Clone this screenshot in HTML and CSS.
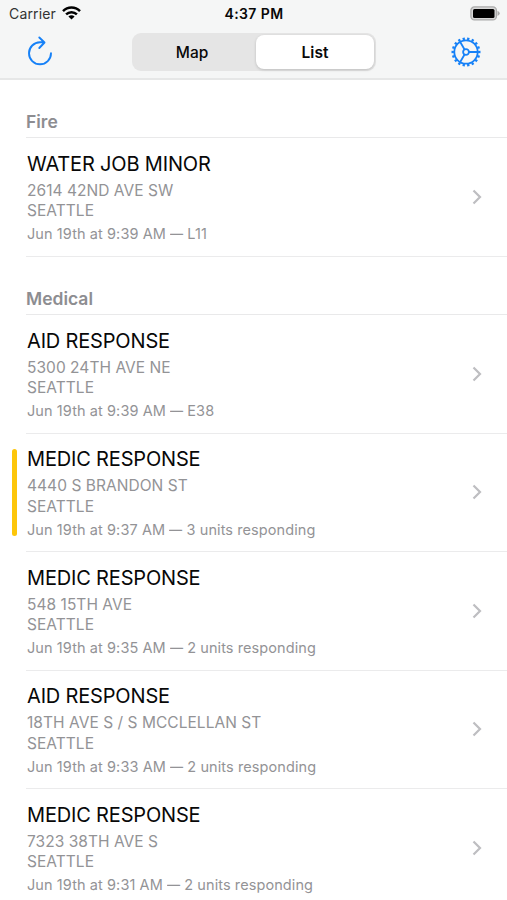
FILE: index.html
```
<!DOCTYPE html>
<html lang="en">
<head>
<meta charset="utf-8">
<title>Incidents</title>
<link rel="stylesheet" href="styles.css">
</head>
<body>
<header class="top">
  <div class="status">
    <div class="carrier"><span>Carrier</span>
      <svg width="19" height="14" viewBox="0 0 19 14" fill="none" stroke="#000" stroke-width="2.5"><path d="M1 5.2C5.8.4 13.2.4 18 5.2M4.1 8.4c3-3 7.8-3 10.800 0"/><path d="M9.500 13.600 6.400 10.500c1.700-1.600 4.500-1.600 6.200 0z" fill="#000" stroke="none"/></svg>
    </div>
    <div class="time">4:37 PM</div>
    <svg class="battery" width="31" height="15" viewBox="0 0 31 15"><rect x=".9" y=".9" width="25.500" height="13" rx="3.500" fill="#d8d8d8" stroke="#aaa" stroke-width="1.300"/><rect x="3" y="2.900" width="21.500" height="9" rx="1.500" fill="#000"/><path d="M27.500 4.700q4.500 2.700 0 5.400z" fill="#aaa"/></svg>
  </div>
  <nav class="toolbar">
    <svg class="refresh" width="26" height="31" viewBox="0 0 26 31" fill="none" stroke="#1681f7" stroke-width="1.900" stroke-linecap="round" stroke-linejoin="round"><path d="M24 17.300A11 11 0 1 1 13 6.300h4.300M12.300 1.500l5.200 5-5.200 5.500"/></svg>
    <div class="segments"><span class="segment">Map</span><span class="segment selected">List</span></div>
    <svg class="gear" width="30" height="30" viewBox="-15 -15 30 30" fill="none" stroke="#1681f7" stroke-width="1.800"><circle r="11.700"/><circle r="13.300" stroke-width="2.400" pathLength="72" stroke-dasharray="2 2" stroke-dashoffset="1"/><circle r="2.900"/><path d="M2.900 0H11.500M-1.450-2.500-5.800-10M-1.450 2.500-5.800 10"/></svg>
  </nav>
</header>
<main>
  <section>
    <h2>Fire</h2>
    <article class="row">
      <div class="info"><h3>WATER JOB MINOR</h3><p class="place">2614 42ND AVE SW<br>SEATTLE</p><p class="when">Jun 19th at 9:39 AM <span class="dash">—</span> L11</p></div>
      <svg class="chevron" viewBox="0 0 10 16"><path d="m1.500 1.500 6.500 6.500-6.500 6.500"/></svg>
    </article>
  </section>
  <section>
    <h2>Medical</h2>
    <article class="row">
      <div class="info"><h3>AID RESPONSE</h3><p class="place">5300 24TH AVE NE<br>SEATTLE</p><p class="when">Jun 19th at 9:39 AM <span class="dash">—</span> E38</p></div>
      <svg class="chevron" viewBox="0 0 10 16"><path d="m1.500 1.500 6.500 6.500-6.500 6.500"/></svg>
    </article>
    <article class="row active">
      <div class="info"><h3>MEDIC RESPONSE</h3><p class="place">4440 S BRANDON ST<br>SEATTLE</p><p class="when">Jun 19th at 9:37 AM <span class="dash">—</span> 3 units responding</p></div>
      <svg class="chevron" viewBox="0 0 10 16"><path d="m1.500 1.500 6.500 6.500-6.500 6.500"/></svg>
    </article>
    <article class="row">
      <div class="info"><h3>MEDIC RESPONSE</h3><p class="place">548 15TH AVE<br>SEATTLE</p><p class="when">Jun 19th at 9:35 AM <span class="dash">—</span> 2 units responding</p></div>
      <svg class="chevron" viewBox="0 0 10 16"><path d="m1.500 1.500 6.500 6.500-6.500 6.500"/></svg>
    </article>
    <article class="row">
      <div class="info"><h3>AID RESPONSE</h3><p class="place">18TH AVE S / S MCCLELLAN ST<br>SEATTLE</p><p class="when">Jun 19th at 9:33 AM <span class="dash">—</span> 2 units responding</p></div>
      <svg class="chevron" viewBox="0 0 10 16"><path d="m1.500 1.500 6.500 6.500-6.500 6.500"/></svg>
    </article>
    <article class="row">
      <div class="info"><h3>MEDIC RESPONSE</h3><p class="place">7323 38TH AVE S<br>SEATTLE</p><p class="when">Jun 19th at 9:31 AM <span class="dash">—</span> 2 units responding</p></div>
      <svg class="chevron" viewBox="0 0 10 16"><path d="m1.500 1.500 6.500 6.500-6.500 6.500"/></svg>
    </article>
  </section>
</main>
</body>
</html>
```
FILE: styles.css
```
* { box-sizing: border-box; margin: 0; padding: 0; }
html, body { height: 900px; overflow: hidden; }
body { background: #fff; color: #080808; font-family: Inter, "Liberation Sans", sans-serif; }
svg { display: block; flex: none; }
.top { height: 80px; background: #f5f6f6; border-bottom: 2px solid #e6e7e7; }
.status { height: 27px; display: grid; grid-template-columns: 1fr auto 1fr; align-items: center; padding: 0 6px 0 9px; }
.carrier { display: flex; align-items: center; gap: 6px; font-size: 14px; letter-spacing: .15px; color: #333; }
.carrier svg { margin-top: -1px; }
.time { font-size: 14px; font-weight: 600; letter-spacing: .4px; margin-left: -2px; }
.battery { justify-self: end; margin-top: -1px; }
.toolbar { height: 50px; display: flex; justify-content: space-between; align-items: center; padding: 0 26.500px; }
.refresh { margin-top: -2px; }
.segments { display: grid; grid-template-columns: 122px 118px; width: 244px; height: 38px; padding: 2px; background: #e5e5e5; border-radius: 9px; margin-left: 5px; }
.segment { display: flex; align-items: center; justify-content: center; font-size: 15.500px; font-weight: 500; }
.segment:first-child { padding-right: 6px; }
.segment.selected { background: #fff; border-radius: 8px; box-shadow: 0 1px 3px rgba(0,0,0,.18); font-weight: 600; }
section { padding-left: 26px; }
h2 { height: 58.500px; padding-top: 31px; font-size: 17.500px; line-height: 22px; font-weight: 600; color: #8d8d91; border-bottom: 1.500px solid #e9e9ea; }
.row { position: relative; height: 118.500px; display: flex; justify-content: space-between; align-items: center; padding: 0 25px 0 1px; border-bottom: 1.500px solid #ebebec; }
.row + .row { margin-top: 0; }
main { margin-top: -.400px; }
.info { align-self: flex-start; padding-top: 11.500px; white-space: nowrap; }
h3 { font-size: 20px; line-height: 28px; font-weight: 400; letter-spacing: -.170px; }
.place { margin-top: 3px; font-size: 15.500px; line-height: 20.500px; letter-spacing: .040px; color: #939396; }
.when { margin-top: 2.500px; font-size: 14.500px; line-height: 20px; letter-spacing: .090px; color: #939396; }
.dash { display: inline-block; width: 13px; transform: scaleX(.9); transform-origin: left; }
.chevron { width: 10px; height: 16px; fill: none; stroke: #bebec1; stroke-width: 2.200; }
.active::before { content: ""; position: absolute; left: -14px; top: 15.500px; width: 5px; height: 87px; border-radius: 3px; background: #fdc60a; }
```
